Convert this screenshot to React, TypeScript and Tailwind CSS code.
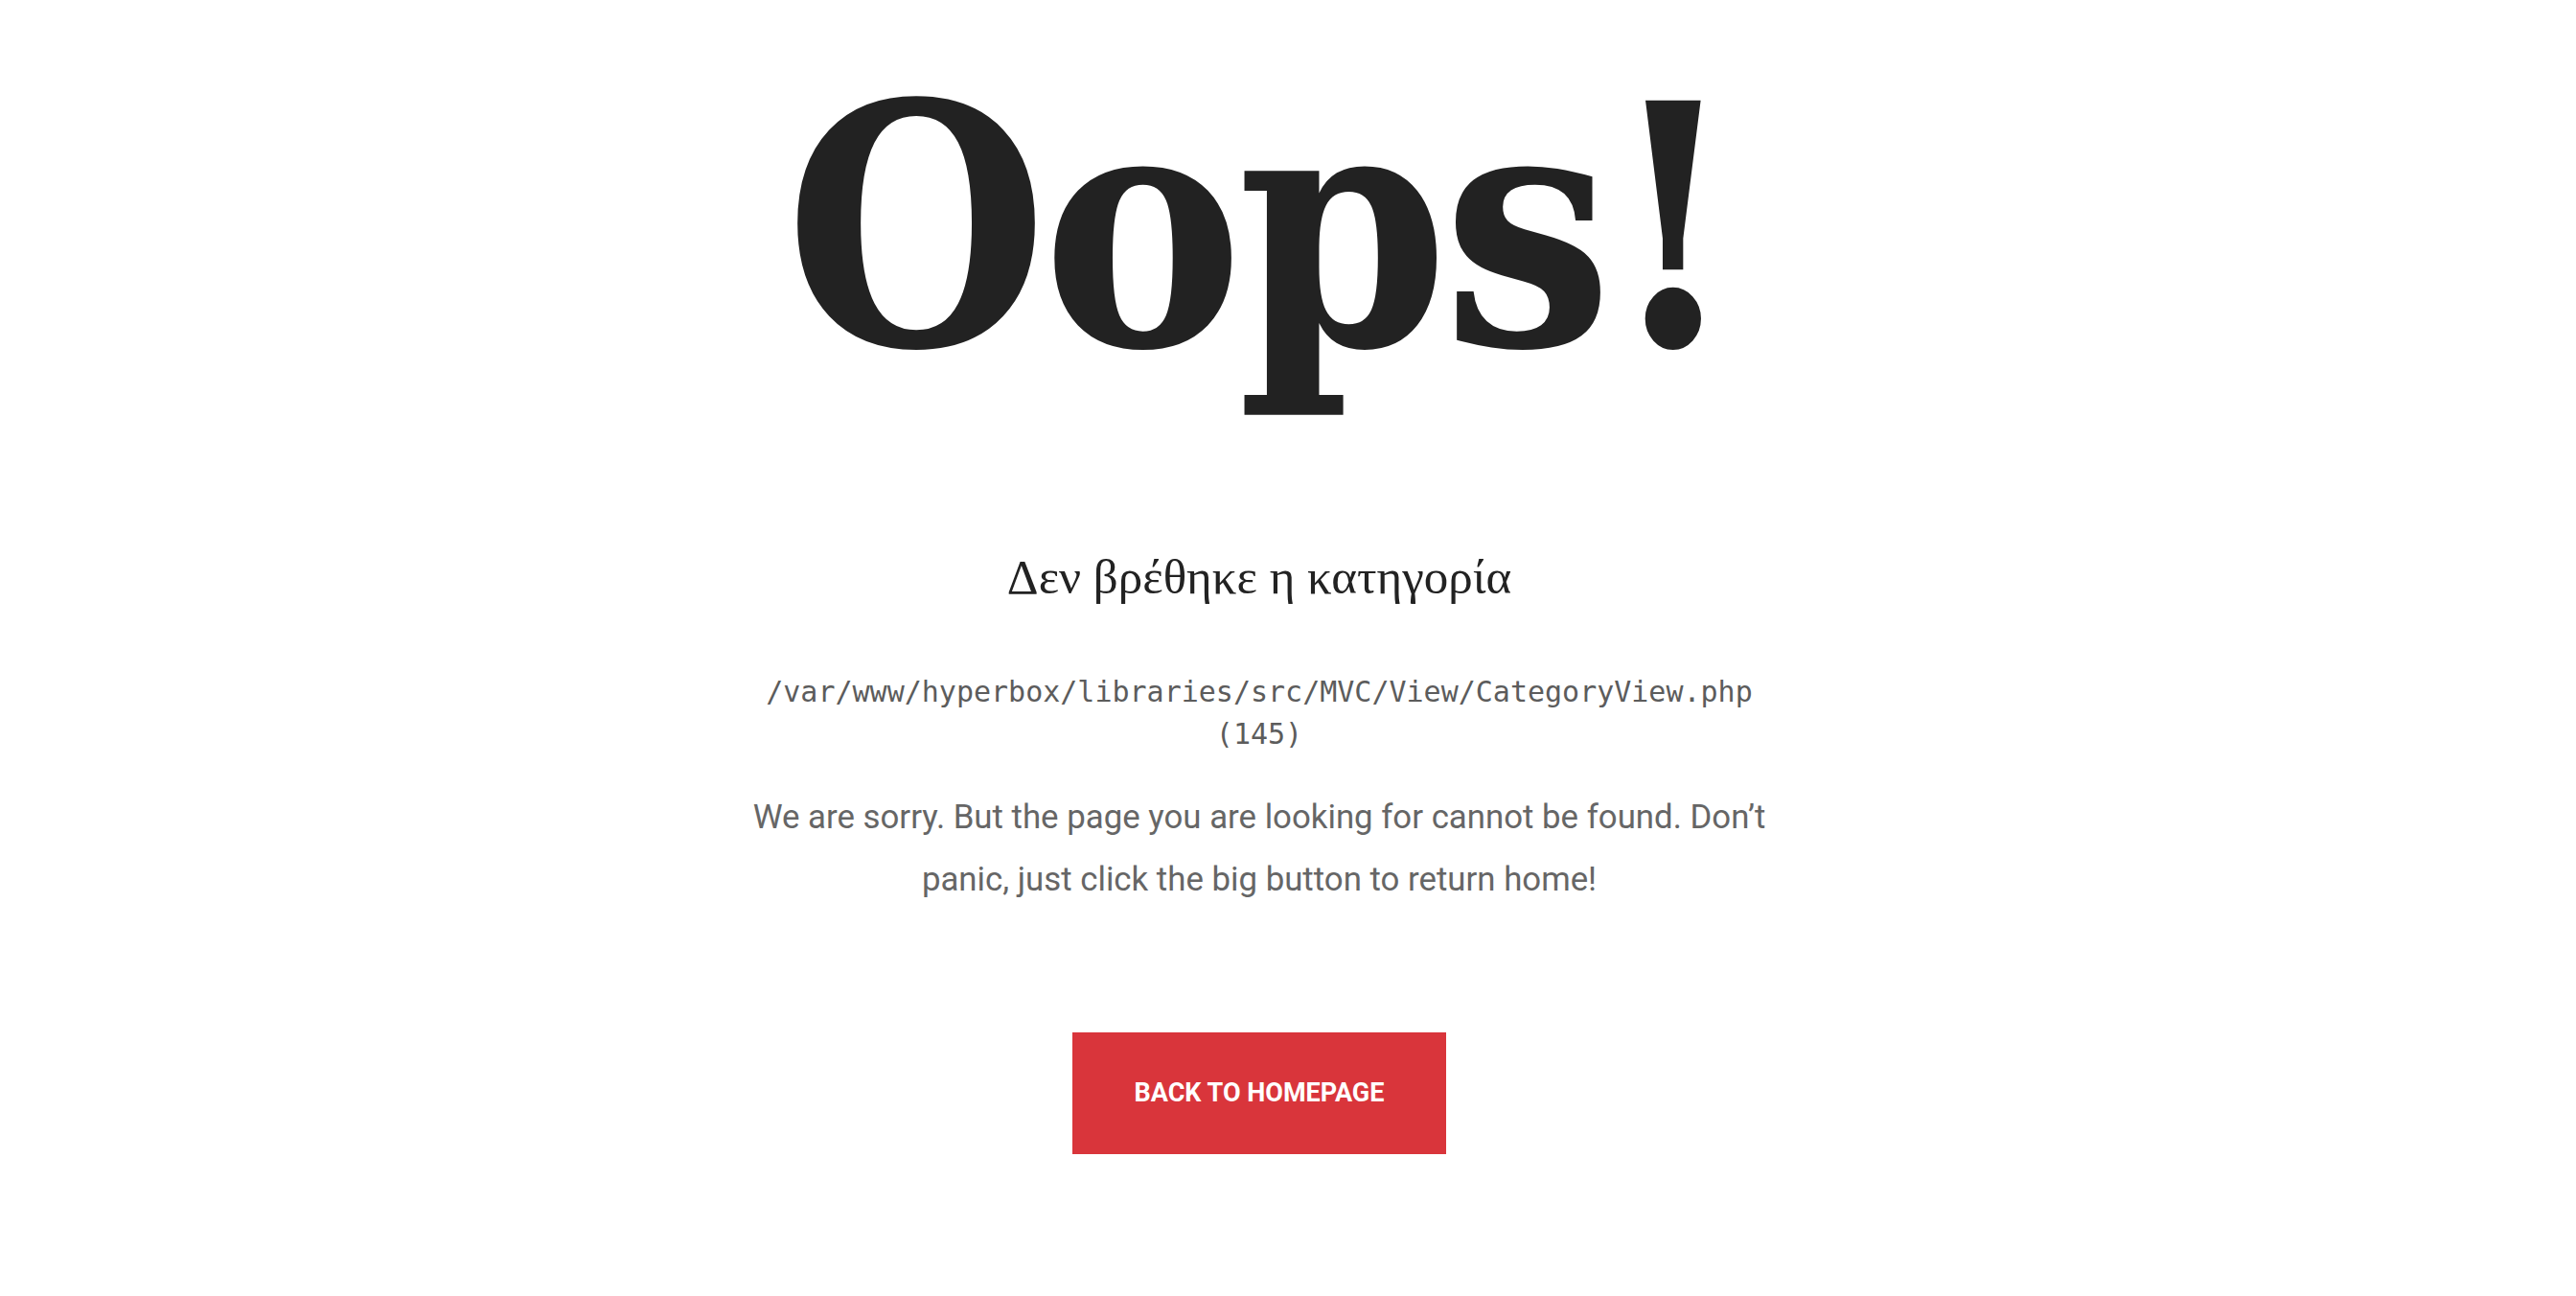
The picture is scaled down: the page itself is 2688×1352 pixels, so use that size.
export default function App() {
  return (
    <div className="min-h-screen w-full bg-white pr-[60px] flex flex-col items-center text-center">
      <h1 className="mt-[62px] h-[350px] text-[350px] leading-none font-bold text-[#222222] tracking-[-6px] [font-stretch:condensed] [font-family:'DejaVu_Serif_Condensed','DejaVu_Serif',serif]">
        Oops!
      </h1>
      <h2 className="mt-[160px] text-[51px] leading-[60px] font-normal text-[#222222] [font-family:'Liberation_Serif','DejaVu_Serif',serif]">
        Δεν βρέθηκε η κατηγορία
      </h2>
      <div className="mt-[68px] w-[1080px] flex flex-col items-center">
        <p className="text-[30px] leading-[44px] text-[#5c5c5c] [font-family:'DejaVu_Sans_Mono','Liberation_Mono',monospace]">
          /var/www/hyperbox/libraries/src/MVC/View/CategoryView.php (145)
        </p>
        <p className="mt-[32px] text-[34.8px] leading-[65px] text-[#666666] [font-family:Roboto,'Noto_Sans',sans-serif]">
          We are sorry. But the page you are looking for cannot be found. Don’t panic, just click the big button to return home!
        </p>
      </div>
      <a
        href="#"
        className="mt-[127px] w-[390px] h-[127px] flex items-center justify-center bg-[#d9353b] text-white text-[27px] font-bold uppercase [font-family:Roboto,'Noto_Sans',sans-serif]"
      >
        Back to homepage
      </a>
    </div>
  );
}
